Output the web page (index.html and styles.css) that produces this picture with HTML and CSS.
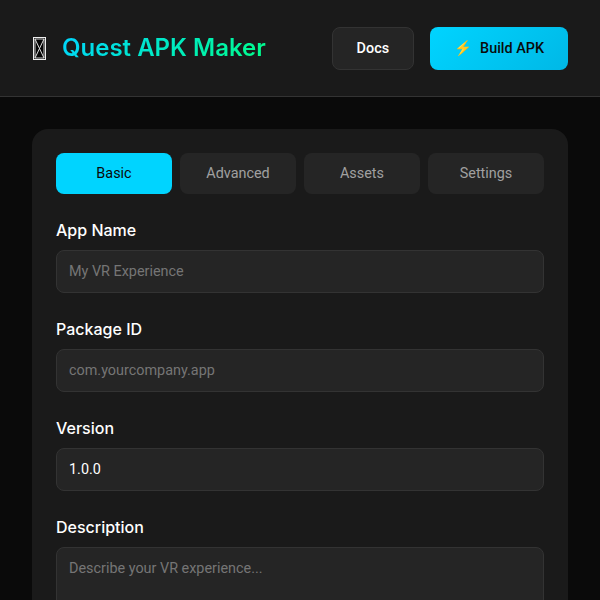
FILE: index.html
```html
<!DOCTYPE html>
<html lang="en">
<head>
    <meta charset="UTF-8">
    <title>Quest APK Maker</title>

    <link rel="stylesheet" href="styles.css">
</head>

<body>

<header class="header">
    <div class="logo">
        <svg class="logo_icon" viewBox="0 0 13 23" fill="none" stroke="#eee" stroke-width="1">
            <rect x="0.5" y="0.5" width="12" height="22" fill="#050505"/>
            <rect x="2" y="2" width="9" height="19" stroke="#ccc"/>
            <path d="M2 2 11 21M11 2 2 21" stroke="#ddd"/>
        </svg>
        <h1 class="logo_title">Quest APK Maker</h1>
    </div>
    <div class="header-actions">
        <button class="btn btn-secondary">Docs</button>
        <button class="btn btn-primary"><span class="btn_icon">⚡</span>Build APK</button>
    </div>
</header>

<main class="main">
    <section class="card">
        <div class="tabs">
            <button class="tabs_button active">Basic</button>
            <button class="tabs_button">Advanced</button>
            <button class="tabs_button">Assets</button>
            <button class="tabs_button">Settings</button>
        </div>

        <div class="field">
            <label class="field_label">App Name</label>
            <input class="field_input" type="text" placeholder="My VR Experience">
        </div>
        <div class="field">
            <label class="field_label">Package ID</label>
            <input class="field_input" type="text" placeholder="com.yourcompany.app">
        </div>
        <div class="field">
            <label class="field_label">Version</label>
            <input class="field_input" type="text" value="1.0.0">
        </div>
        <div class="field">
            <label class="field_label">Description</label>
            <textarea class="field_input field_textarea" placeholder="Describe your VR experience..."></textarea>
        </div>
    </section>
</main>

</body>
</html>
```

FILE: styles.css
```css
* {
    box-sizing: border-box;
}

html, body {
    margin: 0;
    height: 100%;
}

body {
    background: #0a0a0a;
    color: #fff;
    font-family: Inter, "Liberation Sans", sans-serif;
    overflow: hidden;
}

.header {
    display: flex;
    align-items: center;
    justify-content: space-between;
    height: 97px;
    padding: 0 32px;
    background: #1a1a1a;
    border-bottom: 1px solid #333;
}

.logo {
    display: flex;
    align-items: center;
    gap: 16px;
}

.logo_icon {
    width: 13px;
    height: 23px;
    margin-left: 1px;
}

.logo_title {
    margin: 0 0 1px;
    font-size: 24px;
    font-weight: 600;
    line-height: 29px;
    background: linear-gradient(135deg, #00d4ff, #00ff88);
    -webkit-background-clip: text;
    background-clip: text;
    color: transparent;
}

.header-actions {
    display: flex;
    gap: 16px;
}

.btn {
    display: flex;
    align-items: center;
    height: 43px;
    padding: 0 24px;
    border-radius: 8px;
    font-family: Roboto, sans-serif;
    font-size: 14.4px;
    font-weight: 500;
}

.btn-secondary {
    background: #252525;
    border: 1px solid #333;
    color: #fff;
}

.btn-primary {
    gap: 8px;
    background: linear-gradient(135deg, #00d4ff, #00b8e6);
    border: 0;
    color: #0a0a0a;
}

.main {
    padding: 32px;
}

.card {
    padding: 24px;
    background: #1a1a1a;
    border-radius: 16px;
}

.tabs {
    display: grid;
    grid-template-columns: repeat(4, 1fr);
    gap: 8px;
    margin-bottom: 24px;
}

.tabs_button {
    height: 41px;
    background: #252525;
    border: 0;
    border-radius: 8px;
    color: #a0a0a0;
    font-family: Roboto, sans-serif;
    font-size: 14.4px;
    font-weight: 400;
}

.tabs_button.active {
    background: #00d4ff;
    color: #0a0a0a;
}

.field {
    margin-bottom: 24px;
}

.field_label {
    display: block;
    margin-bottom: 8px;
    font-size: 16px;
    font-weight: 500;
    line-height: 24px;
}

.field_input {
    display: block;
    width: 100%;
    height: 43px;
    padding: 12px;
    background: #252525;
    border: 1px solid #333;
    border-radius: 8px;
    color: #fff;
    font-family: Roboto, sans-serif;
    font-size: 14.4px;
}

.field_input::placeholder {
    color: #757575;
}

.field_textarea {
    height: 120px;
    resize: none;
}
```
